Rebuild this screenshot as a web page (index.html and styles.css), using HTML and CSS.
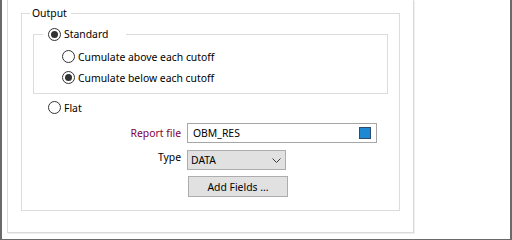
FILE: index.html
```html
<!DOCTYPE html>
<html>
<head>
<meta charset="utf-8">
<link rel="stylesheet" href="styles.css">
</head>
<body>
<div class="window">
  <div class="panel">
    <fieldset class="group output">
      <legend class="legend">Output</legend>
      <fieldset class="group standard">
        <legend class="legend radio-legend"><span class="radio checked"></span><span>Standard</span></legend>
        <div class="option sub"><span class="radio"></span><span>Cumulate above each cutoff</span></div>
        <div class="option sub"><span class="radio checked"></span><span>Cumulate below each cutoff</span></div>
      </fieldset>
      <div class="option flat"><span class="radio"></span><span>Flat</span></div>
      <div class="form">
        <span class="label required">Report file</span>
        <div class="input"><span>OBM_RES</span><span class="browse"></span></div>
        <span class="label">Type</span>
        <div class="select"><span>DATA</span><svg class="chevron" width="9" height="5" viewBox="0 0 9 5"><path d="M0.5 0.5 L4.5 4.5 L8.5 0.5" fill="none" stroke="#3c3c3c" stroke-width="1"/></svg></div>
        <span class="label"></span>
        <div class="button">Add Fields ...</div>
      </div>
    </fieldset>
  </div>
</div>
</body>
</html>
```
FILE: styles.css
```css
* { box-sizing: border-box; }

html, body {
  margin: 0;
  padding: 0;
  background: #fff;
}

body {
  font-family: "Noto Sans", "Open Sans", sans-serif;
  font-size: 10.4px;
  color: #000;
}

.window {
  width: 512px;
  height: 240px;
  background: #fff;
  border-left: 2px solid #6a6a6a;
  border-right: 2px solid #6a6a6a;
  border-bottom: 1px solid #6a6a6a;
  padding-left: 5px;
  display: flex;
  align-items: flex-start;
  overflow: hidden;
}

.panel {
  width: 407px;
  height: 233px;
  border-left: 1px solid #dadada;
  border-right: 1px solid #dadada;
  border-bottom: 1px solid #dadada;
  box-shadow: 1px 1px 0 #efefef;
  padding: 6px 0 0 13px;
}

.group {
  margin: 0;
  padding: 0;
  border: 1px solid #dcdcdc;
  min-inline-size: 0;
}

.legend {
  line-height: 15px;
  height: 15px;
  padding: 0 4px 0 2px;
}

.output {
  width: 379px;
  padding-bottom: 13px;
}

.output > .legend {
  margin-left: 8px;
}

.standard {
  width: 355px;
  margin: 6px 0 0 11px;
  padding: 4px 0 5px 0;
}

.radio-legend {
  margin-left: 9px;
  width: 83px;
  padding: 0 0 0 5px;
  display: flex;
  align-items: center;
  gap: 3px;
}

.radio {
  width: 13px;
  height: 13px;
  flex: none;
  border: 1px solid #333;
  border-radius: 50%;
  background: #fff;
  display: flex;
  align-items: center;
  justify-content: center;
}

.radio.checked::after {
  content: "";
  width: 7px;
  height: 7px;
  border-radius: 50%;
  background: #333;
}

.option {
  height: 21px;
  display: flex;
  align-items: center;
  gap: 3px;
}

.sub {
  margin-left: 28px;
}

.flat {
  margin: 3px 0 0 26px;
}

.form {
  margin-top: 5px;
  display: grid;
  grid-template-columns: 159px auto;
  column-gap: 6px;
  justify-content: start;
  align-items: center;
}

.label {
  justify-self: end;
}

.required {
  color: #800040;
}

.input {
  width: 190px;
  height: 20px;
  border: 1px solid #a6a6a6;
  display: flex;
  align-items: center;
  justify-content: space-between;
  padding: 0 5px;
}

.browse {
  width: 12px;
  height: 12px;
  background: #1e88d2;
  border: 1px solid #2b4c6e;
}

.select {
  width: 99px;
  height: 20px;
  margin-top: 7px;
  background: #e1e1e1;
  border: 1px solid #adadad;
  display: flex;
  align-items: center;
  justify-content: space-between;
  padding: 0 4px 0 3px;
}

.chevron {
  display: block;
}

.button {
  width: 100px;
  height: 21px;
  margin: 6px 0 0 1px;
  background: #e1e1e1;
  border: 1px solid #adadad;
  display: flex;
  align-items: center;
  justify-content: center;
}
```
